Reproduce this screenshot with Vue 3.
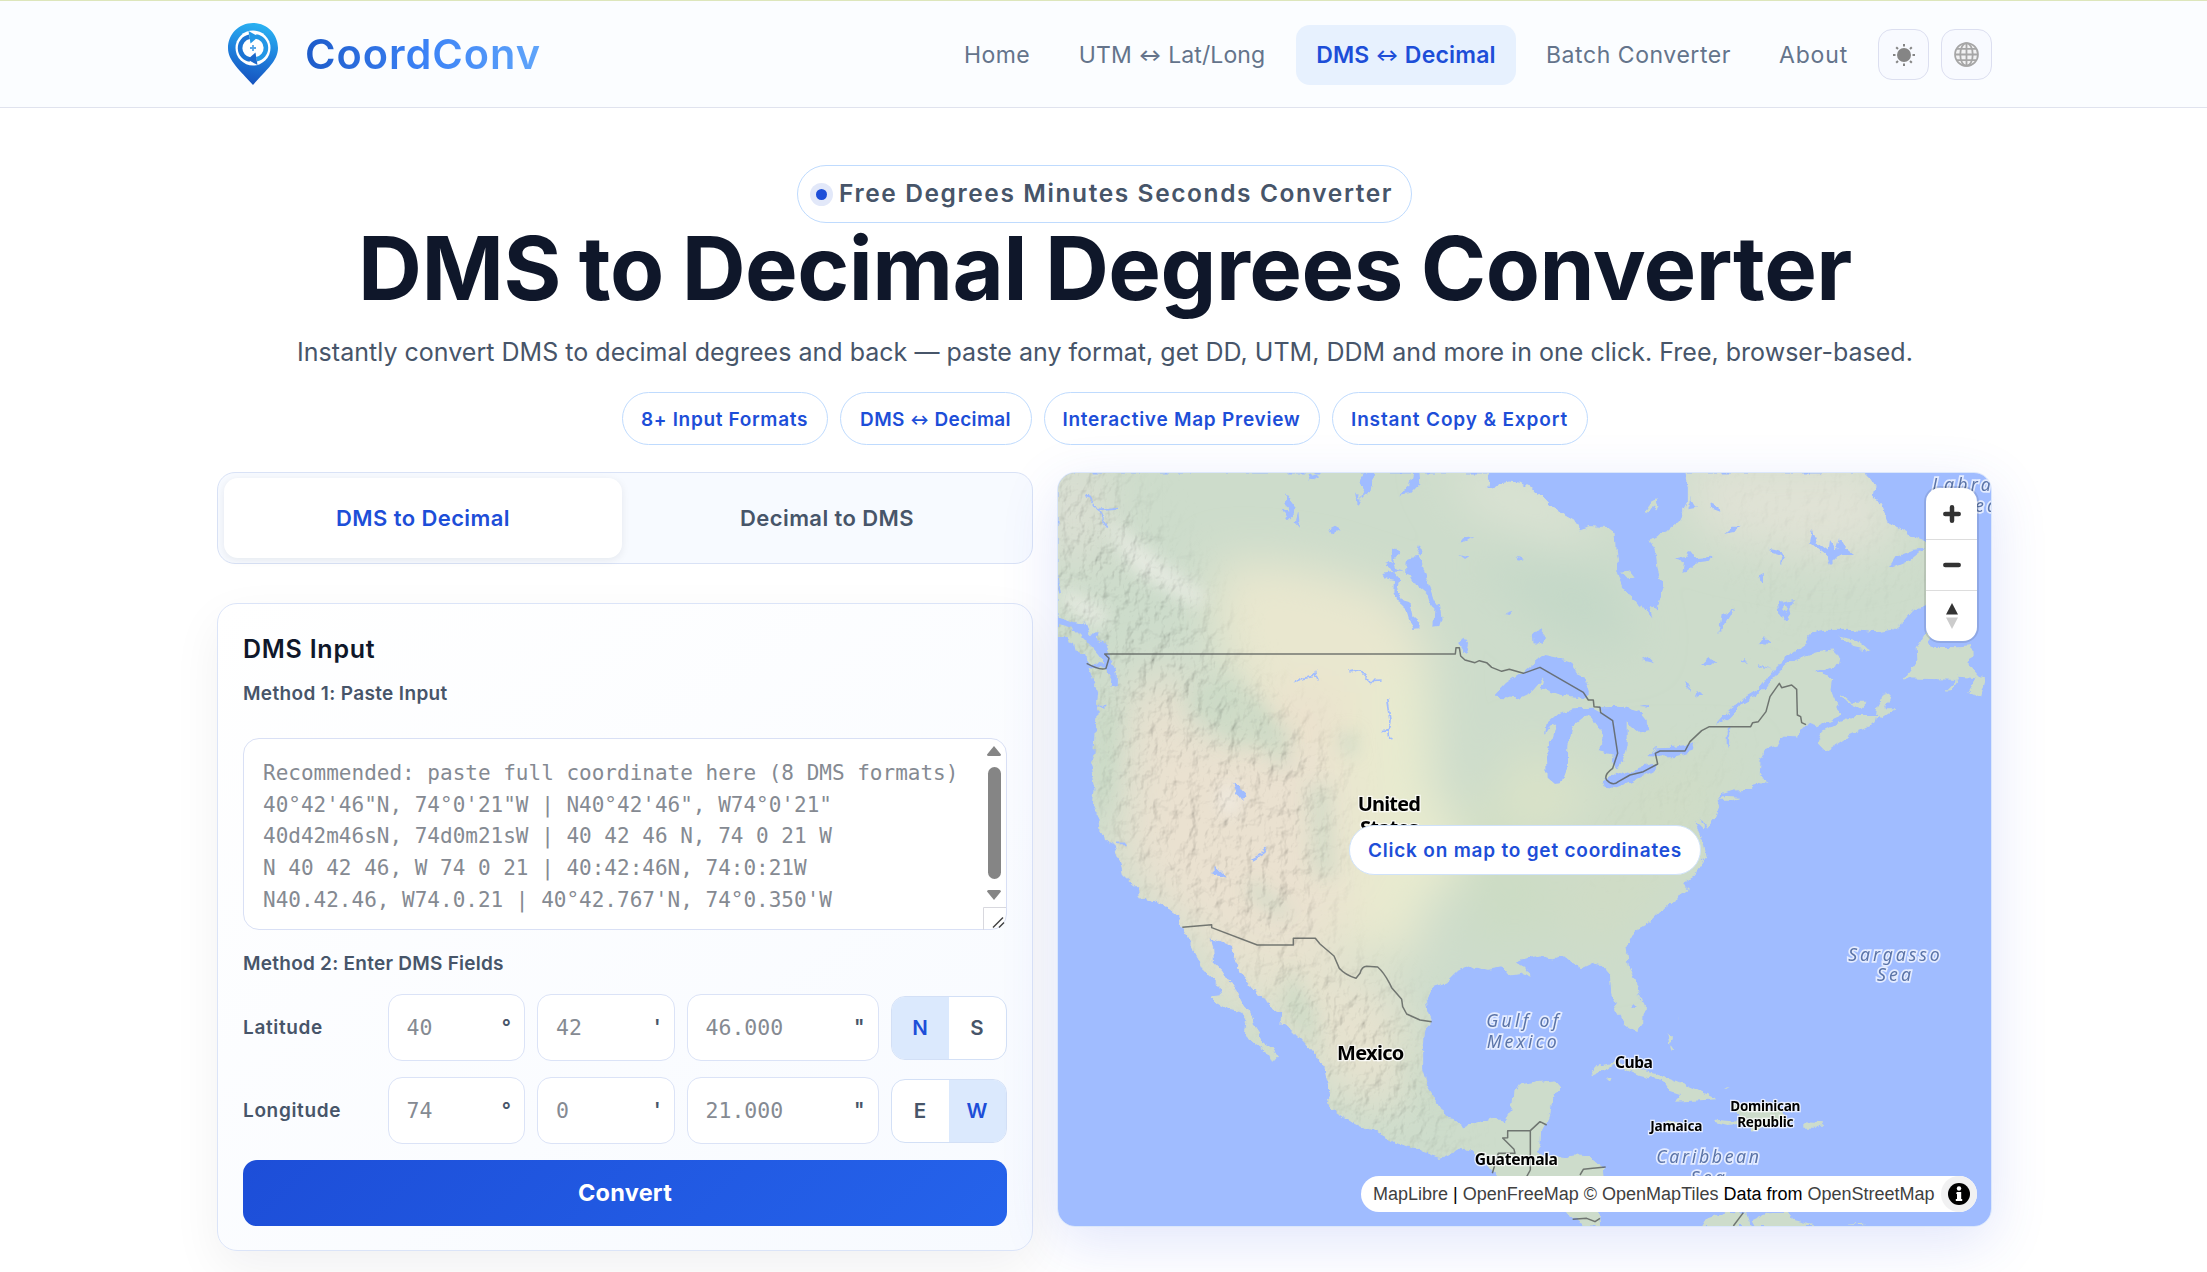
<script setup>
const nav = [
  { parts: ['Home'], width: 102, track: 0.39 },
  { parts: ['UTM', 'Lat/Long'], width: 224, track: 0.1 },
  { parts: ['DMS', 'Decimal'], width: 220, track: 0.2, active: true },
  { parts: ['Batch Converter'], width: 221, track: 0.56 },
  { parts: ['About'], width: 105, track: 0.82 },
]
const chips = [
  { parts: ['8+ Input Formats'], width: 206, track: 0.66 },
  { parts: ['DMS', 'Decimal'], width: 192, track: 0.35 },
  { parts: ['Interactive Map Preview'], width: 276, track: 0.75 },
  { parts: ['Instant Copy & Export'], width: 256, track: 0.86 },
]
const rows = [
  { label: 'Latitude', d: '40', m: '42', s: '46.000', dirs: ['N', 'S'], on: 'N' },
  { label: 'Longitude', d: '74', m: '0', s: '21.000', dirs: ['E', 'W'], on: 'W' },
]
const sample = `Recommended: paste full coordinate here (8 DMS formats)
40°42'46"N, 74°0'21"W | N40°42'46", W74°0'21"
40d42m46sN, 74d0m21sW | 40 42 46 N, 74 0 21 W
N 40 42 46, W 74 0 21 | 40:42:46N, 74:0:21W
N40.42.46, W74.0.21 | 40°42.767'N, 74°0.350'W`

const mainland = 'M54 39 L1345 39 L1340 85 L1370 76 L1410 69 L1440 73 L1470 85 L1500 102 L1530 133 L1570 165 L1610 188 L1618 210 L1650 200 L1705 203 L1725 218 L1728 260 L1732 300 L1730 340 L1745 380 L1770 410 L1795 450 L1810 440 L1840 478 L1830 440 L1855 450 L1860 420 L1870 385 L1855 330 L1850 285 L1830 240 L1880 215 L1920 180 L1945 130 L1945 80 L1935 39 L2470 39 L2485 50 L2505 80 L2500 105 L2525 140 L2540 185 L2575 205 L2590 215 L2620 232 L2655 245 L2665 275 L2668 430 L2620 450 L2590 485 L2560 507 L2510 515 L2430 508 L2350 508 L2315 515 L2290 558 L2240 590 L2200 630 L2160 685 L2110 715 L2070 745 L2020 800 L2070 772 L2110 730 L2160 702 L2200 655 L2235 620 L2280 592 L2330 575 L2380 570 L2400 590 L2395 615 L2360 627 L2310 633 L2340 643 L2375 655 L2370 690 L2390 745 L2405 762 L2330 797 L2300 790 L2270 828 L2230 825 L2215 853 L2180 865 L2160 900 L2158 940 L2170 960 L2180 970 L2150 962 L2130 988 L2080 990 L2050 1000 L2032 1025 L2036 1040 L2025 1070 L2000 1100 L1985 1070 L1987 1105 L1960 1082 L1975 1120 L1990 1150 L1998 1190 L1970 1230 L1965 1245 L1925 1270 L1945 1290 L1900 1320 L1870 1345 L1830 1385 L1785 1410 L1758 1460 L1765 1520 L1790 1580 L1810 1640 L1808 1690 L1790 1714 L1760 1695 L1730 1645 L1715 1600 L1712 1550 L1680 1513 L1655 1507 L1622 1523 L1580 1490 L1550 1495 L1500 1488 L1440 1500 L1425 1508 L1455 1525 L1470 1548 L1445 1540 L1410 1545 L1390 1520 L1340 1528 L1300 1517 L1250 1535 L1220 1565 L1178 1580 L1157 1625 L1160 1650 L1175 1688 L1155 1710 L1148 1770 L1148 1830 L1165 1885 L1190 1925 L1218 1972 L1240 1975 L1270 2000 L1320 1990 L1365 1978 L1392 1985 L1412 1955 L1422 1930 L1425 1890 L1440 1878 L1500 1867 L1545 1863 L1560 1880 L1532 1920 L1525 1970 L1505 2010 L1503 2050 L1490 2080 L1520 2090 L1570 2095 L1600 2088 L1655 2090 L1665 2105 L1690 2122 L1692 2150 L1680 2200 L1672 2250 L1680 2298 L1640 2298 L1600 2275 L1580 2250 L1500 2190 L1400 2170 L1365 2140 L1340 2110 L1300 2075 L1260 2065 L1230 2083 L1200 2092 L1120 2065 L1060 2042 L1000 2010 L950 1995 L905 1965 L875 1940 L862 1915 L872 1890 L862 1860 L855 1825 L830 1790 L790 1745 L755 1710 L720 1692 L722 1660 L690 1635 L680 1610 L650 1600 L625 1570 L600 1530 L585 1490 L577 1457 L545 1442 L510 1430 L518 1460 L520 1505 L545 1530 L565 1560 L590 1595 L605 1625 L630 1655 L640 1690 L660 1720 L665 1750 L697 1765 L712 1790 L697 1807 L685 1780 L650 1755 L616 1725 L620 1690 L600 1650 L560 1645 L530 1628 L512 1610 L545 1607 L540 1580 L520 1558 L485 1525 L475 1495 L455 1460 L440 1430 L425 1400 L418 1370 L380 1340 L350 1325 L298 1312 L295 1285 L250 1245 L240 1200 L225 1165 L200 1140 L182 1110 L180 1075 L160 1035 L165 990 L152 915 L165 880 L170 780 L175 700 L160 660 L147 620 L195 628 L210 650 L207 685 L232 680 L232 640 L215 600 L208 580 L200 550 L172 540 L178 518 L150 520 L135 480 L135 492 L100 488 L54 470 Z'

const islands = [
  'M54 528 L80 528 L85 545 L105 555 L110 575 L135 585 L145 605 L190 615 L185 595 L160 565 L135 540 L100 505 L54 492 Z',
  'M2655 515 L2672 560 L2760 562 L2797 558 L2798 590 L2775 603 L2800 625 L2822 650 L2835 655 L2820 712 L2785 695 L2810 655 L2760 650 L2730 693 L2715 695 L2750 660 L2700 658 L2590 655 L2632 600 L2630 560 Z',
  'M2400 530 L2450 540 L2495 575 L2440 563 Z',
  'M2400 700 L2430 725 L2480 725 L2460 745 L2410 720 Z',
  'M2395 790 L2450 768 L2515 768 L2510 790 L2430 825 L2400 845 L2355 875 L2330 850 L2345 815 Z',
  'M2535 700 L2550 710 L2535 745 L2565 745 L2530 768 L2508 765 L2512 740 Z',
  'M2035 1022 L2060 1008 L2100 1010 L2070 1022 Z',
  'M1647 1850 L1665 1820 L1730 1805 L1790 1825 L1850 1840 L1915 1865 L1960 1885 L2030 1918 L1905 1925 L1920 1905 L1890 1895 L1865 1860 L1800 1845 L1730 1815 L1680 1835 Z',
  'M1698 1855 L1715 1853 L1710 1865 Z',
  'M1875 1985 L1920 1990 L1900 2010 Z',
  'M2070 1935 L2150 1937 L2220 1955 L2255 1980 L2200 1990 L2135 2012 L2120 1990 L2060 1995 L2022 1985 L2030 1980 L2095 1985 L2090 1955 Z',
  'M2293 1987 L2350 1990 L2335 2003 L2293 2003 Z',
  'M1882 1720 L1898 1735 L1888 1752 Z',
  'M1893 1752 L1903 1768 L1897 1772 Z',
  'M1915 1685 L1922 1662 L1917 1680 Z',
  'M2052 1884 L2072 1880 L2060 1888 Z',
  'M1985 2298 L2000 2275 L2060 2255 L2115 2258 L2125 2285 L2140 2298 Z',
  'M2135 2280 L2180 2260 L2250 2258 L2260 2280 L2330 2298 L2145 2298 Z',
  'M2405 2291 L2475 2288 L2470 2293 Z',
  'M1815 156 L1838 122 L1850 118 L1855 140 L1848 158 L1842 136 L1826 160 Z',
  'M1742 335 L1770 332 L1787 353 L1760 355 Z',
]

const lakes = [
  'M945 100 L960 120 L972 78 L960 65 L968 39 L1000 39 L992 95 L970 110 L950 130 Z',
  'M1120 39 L1135 39 L1138 70 L1110 100 L1078 104 L1110 78 Z',
  'M802 65 L810 45 L840 39 L835 52 Z',
  'M738 97 L762 130 L758 165 L742 180 L724 150 L745 155 Z',
  'M775 155 L780 200 L767 185 Z',
  'M870 205 L885 197 L902 206 L878 220 Z',
  'M1105 292 L1135 288 L1150 320 L1168 370 L1185 420 L1200 440 L1205 475 L1198 498 L1180 500 L1183 450 L1168 430 L1160 405 L1130 380 L1110 345 L1095 340 L1097 310 Z',
  'M1132 285 L1140 257 L1148 270 L1140 288 Z',
  'M1052 270 L1068 265 L1078 280 L1060 300 L1075 330 L1092 335 L1060 335 L1032 315 L1055 305 Z',
  'M1027 342 L1060 335 L1078 355 L1072 385 L1088 420 L1108 425 L1118 470 L1140 490 L1138 508 L1120 510 L1102 450 L1075 425 L1060 395 L1062 360 L1035 355 Z',
  'M1262 250 L1275 232 L1303 228 L1275 245 Z',
  'M1255 285 L1288 292 L1275 300 Z',
  'M1430 290 L1452 296 L1440 302 Z',
  'M1390 465 L1420 455 L1410 468 Z',
  'M1258 550 L1268 528 L1290 555 L1278 580 Z',
  'M1478 520 L1500 508 L1515 525 L1510 555 L1480 545 Z',
  'M1362 710 L1400 670 L1450 635 L1490 600 L1510 585 L1560 595 L1590 605 L1610 640 L1635 650 L1650 700 L1630 718 L1560 705 L1505 685 L1510 655 L1480 690 L1430 715 L1400 712 Z',
  'M1515 825 L1520 790 L1560 755 L1600 745 L1660 743 L1690 760 L1720 790 L1735 830 L1745 860 L1735 925 L1715 910 L1718 880 L1668 870 L1690 850 L1690 820 L1660 780 L1640 765 L1620 780 L1595 800 L1582 860 L1580 930 L1565 970 L1545 972 L1520 950 L1518 890 L1540 830 L1550 790 L1530 800 Z',
  'M1680 742 L1750 740 L1800 755 L1820 780 L1825 812 L1795 820 L1760 790 L1760 850 L1750 900 L1732 925 L1738 870 L1720 790 L1690 765 Z',
  'M1690 965 L1730 935 L1760 945 L1800 920 L1850 910 L1845 930 L1800 955 L1755 975 L1730 985 L1695 980 Z',
  'M1822 888 L1850 862 L1900 860 L1940 855 L1960 850 L1955 875 L1910 888 L1850 890 Z',
  'M580 975 L595 975 L605 990 L615 1000 L620 1015 L605 1020 L590 1000 Z',
  'M2060 805 L2068 800 L2067 865 L2060 850 Z',
  'M1965 715 L1990 700 L1970 690 Z',
  'M1900 300 L1940 290 L1950 270 L1960 295 L2018 290 L2010 305 L1960 312 L1930 340 L1935 310 Z',
  'M2008 128 L2035 140 L2038 155 L2010 145 Z',
  'M1945 145 L1955 115 L1970 140 Z',
  'M2050 222 L2075 200 L2105 200 L2085 215 Z',
  'M2182 260 L2225 270 L2238 295 L2220 315 L2225 285 L2195 275 Z',
  'M2150 350 L2172 342 L2172 368 Z',
  'M2310 250 L2318 210 L2332 250 L2365 275 L2370 240 L2390 270 L2400 235 L2415 260 L2445 285 L2400 285 L2370 315 L2360 290 Z',
  'M2548 325 L2570 290 L2620 270 L2655 265 L2610 300 Z',
  'M2035 520 L2045 465 L2085 445 L2060 485 Z',
  'M2213 418 L2235 430 L2262 423 L2250 445 L2254 462 L2236 484 L2218 460 Z M2235 436 L2226 448 L2237 458 L2247 446 Z',
  'M1805 600 L1825 590 L1845 610 Z',
  'M1985 610 L2010 590 L2032 615 Z',
  'M2100 600 L2115 598 L2120 610 Z',
  'M1932 660 L1950 670 L1945 690 Z',
  'M2150 552 L2175 535 L2195 555 Z',
  'M2150 615 L2200 632 L2155 622 Z',
  'M1800 738 L1830 732 L1830 740 Z',
  'M1775 1640 L1785 1632 L1790 1642 L1780 1650 Z',
  'M513 1240 L530 1222 L545 1235 L560 1250 Z',
]

const rivers = 'M140 102 L175 155 L203 203 M170 152 L237 146 M762 668 L790 655 L820 650 L828 637 L835 665 M925 636 L955 630 L985 662 L1025 660 M1040 712 L1050 780 L1045 812 L1025 815 M1045 812 L1050 832 M680 1158 L665 1185 L638 1200 M225 1150 L260 1150 M54 355 L60 400 M170 737 L200 737'

const borders = 'M140 610 Q180 632 198 625 L207 595 L194 582 L1246 582 L1248 563 L1258 563 L1262 588 L1275 600 L1305 608 L1318 602 L1340 608 L1355 622 L1385 634 L1408 628 L1450 640 L1500 622 L1630 697 L1645 720 L1660 720 L1662 740 L1680 742 L1682 758 L1718 782 L1733 880 L1718 925 Q1690 945 1700 960 Q1718 980 1735 965 L1770 945 L1810 935 L1853 912 L1846 880 L1860 873 L1935 873 L1950 845 L1985 812 L2008 800 L2132 800 L2138 788 L2155 785 L2178 755 L2190 710 L2218 670 L2225 683 L2255 675 L2270 688 L2272 765 L2282 770 L2285 788 L2298 794 M427 1402 L515 1394 L515 1403 L652 1455 L760 1455 L760 1435 L826 1435 L840 1452 L882 1488 L898 1525 Q915 1545 948 1555 L960 1540 Q965 1520 980 1519 L1013 1521 Q1035 1540 1055 1583 L1085 1618 L1088 1640 L1100 1662 L1140 1680 L1175 1685 M1357 2140 L1375 2080 L1425 2080 L1422 2068 L1388 2034 L1403 2033 L1403 2012 L1471 2012 L1471 2130 M1471 2012 L1500 1985 L1520 1995 M1471 2130 L1460 2150 M1620 2145 L1630 2128 L1697 2121 M1598 2278 L1640 2275 L1665 2285 L1680 2275 M2080 2298 L2110 2258'

const labels = [
  { text: 'United', x: 1048, y: 1052, w: 190, size: 60, kind: 'country' },
  { text: 'States', x: 1048, y: 1124, w: 176, size: 60, kind: 'country' },
  { text: 'Mexico', x: 992, y: 1800, w: 202, size: 60, kind: 'country' },
  { text: 'Cuba', x: 1782, y: 1823, w: 114, size: 47, kind: 'country' },
  { text: 'Jamaica', x: 1909, y: 2013, w: 157, size: 41, kind: 'country' },
  { text: 'Dominican', x: 2176, y: 1953, w: 210, size: 41, kind: 'country' },
  { text: 'Republic', x: 2176, y: 2002, w: 169, size: 41, kind: 'country' },
  { text: 'Guatemala', x: 1429, y: 2115, w: 250, size: 47, kind: 'country' },
  { text: 'Gulf of', x: 1447, y: 1702, w: 216, size: 53, kind: 'sea' },
  { text: 'Mexico', x: 1445, y: 1763, w: 210, size: 53, kind: 'sea' },
  { text: 'Sargasso', x: 2562, y: 1502, w: 274, size: 53, kind: 'sea' },
  { text: 'Sea', x: 2562, y: 1563, w: 102, size: 53, kind: 'sea' },
  { text: 'Caribbean', x: 2003, y: 2110, w: 308, size: 53, kind: 'sea' },
  { text: 'Sea', x: 2003, y: 2171, w: 102, size: 53, kind: 'sea' },
  { text: 'Labrador', x: 2820, y: 94, w: 286, size: 53, kind: 'sea' },
  { text: 'Sea', x: 2820, y: 156, w: 102, size: 53, kind: 'sea' },
]
</script>

<template>
  <div class="page">
    <header class="top">
      <div class="wrap bar">
        <div class="brand">
          <svg class="pin" viewBox="0 0 50 62">
            <defs>
              <linearGradient id="pinFill" x1="0.6" y1="0" x2="0.4" y2="1">
                <stop offset="0" stop-color="#29b2f2" />
                <stop offset="0.5" stop-color="#1f7fdc" />
                <stop offset="1" stop-color="#1551bd" />
              </linearGradient>
            </defs>
            <path d="M25 0C11 0 0 11 0 25c0 13 12 22 25 37 13-15 25-24 25-37C50 11 39 0 25 0z" fill="url(#pinFill)" />
            <circle cx="25" cy="25" r="17.500" fill="#fff" />
            <path d="M22 36.500A11.500 11.500 0 0 1 21.500 13.800" fill="none" stroke="#1c74d3" stroke-width="4.600" />
            <path d="M28 13.500A11.500 11.500 0 0 1 28.500 36.200" fill="none" stroke="#2397e6" stroke-width="4.600" />
            <path d="M20.500 8l10 5.500-8 7z" fill="#2397e6" />
            <path d="M29.500 42l-10-5.500 8-7z" fill="#1c68cb" />
            <path d="M25 22v6M22 25h6" stroke="#58a7e8" stroke-width="1.800" />
          </svg>
          <span class="name">CoordConv</span>
        </div>
        <nav class="nav">
          <a v-for="n in nav" :key="n.parts.join()" :class="{ on: n.active }" :style="{ width: n.width + 'px', letterSpacing: n.track + 'px' }"><span>{{ n.parts[0] }}<template v-if="n.parts[1]">{{ ' ' }}<em>↔</em> {{ n.parts[1] }}</template></span></a>
          <button class="sq">
            <svg viewBox="0 0 24 24" width="24" height="24"><circle cx="12" cy="12" r="7" fill="#858585" /><g stroke="#858585" stroke-width="2"><path d="M12 1v2.500M12 20.500V23M1 12h2.500M20.500 12H23M4.200 4.200L6 6M18 18l1.800 1.800M4.200 19.800L6 18M18 6l1.800-1.800" /></g></svg>
          </button>
          <button class="sq">
            <svg viewBox="0 0 24 24" width="25" height="25"><circle cx="12" cy="12" r="11" fill="#f1f1f2" /><g fill="none" stroke="#a6a6a6" stroke-width="1.700"><circle cx="12" cy="12" r="11" /><ellipse cx="12" cy="12" rx="6" ry="11" /><path d="M12 1v22M1 12h22M2.500 6.500h19M2.500 17.500h19" /></g></svg>
          </button>
        </nav>
      </div>
    </header>

    <main class="wrap">
      <section class="hero">
        <div class="badge"><i class="dot"></i><span>Free Degrees Minutes Seconds Converter</span></div>
        <h1>DMS to Decimal Degrees Converter</h1>
        <p>Instantly convert DMS to decimal degrees and back — paste any format, get DD, UTM, DDM and more in one click. Free, browser-based.</p>
        <ul class="chips">
          <li v-for="c in chips" :key="c.parts.join()" :style="{ width: c.width + 'px', letterSpacing: c.track + 'px' }"><span>{{ c.parts[0] }}<template v-if="c.parts[1]">{{ ' ' }}<em>↔</em> {{ c.parts[1] }}</template></span></li>
        </ul>
      </section>

      <div class="cols">
        <div class="left">
          <div class="tabs">
            <button class="on">DMS to Decimal</button>
            <button>Decimal to DMS</button>
          </div>
          <section class="card">
            <h2>DMS Input</h2>
            <h3>Method 1: Paste Input</h3>
            <div class="area">
              <pre>{{ sample }}</pre>
              <div class="scroll">
                <svg width="14" height="10" viewBox="0 0 14 10"><path d="M7 0L14 8.500Q14 10 12.500 10H1.500Q0 10 0 8.500Z" fill="#858585" /></svg>
                <i></i>
                <svg width="14" height="10" viewBox="0 0 14 10"><path d="M7 10L14 1.500Q14 0 12.500 0H1.500Q0 0 0 1.500Z" fill="#858585" /></svg>
              </div>
              <svg class="grip" width="23" height="23" viewBox="0 0 23 23"><path d="M.5 23V.5H23" fill="none" stroke="#d8d8de" /><path d="M10 20.500L20 10.500M16 20.500l5-5" stroke="#444" stroke-width="1.500" /></svg>
            </div>
            <h3 class="second">Method 2: Enter DMS Fields</h3>
            <div v-for="r in rows" :key="r.label" class="row">
              <label>{{ r.label }}</label>
              <div class="field">{{ r.d }}<sup>°</sup></div>
              <div class="field">{{ r.m }}<sup>'</sup></div>
              <div class="field wide">{{ r.s }}<sup>"</sup></div>
              <div class="toggle"><b v-for="k in r.dirs" :key="k" :class="{ on: k === r.on }">{{ k }}</b></div>
            </div>
            <button class="convert">Convert</button>
          </section>
        </div>

        <section class="map">
          <svg class="canvas" viewBox="54 39 2799 2259" preserveAspectRatio="none">
            <defs>
              <filter id="rough" x="0" y="0" width="1" height="1">
                <feTurbulence type="fractalNoise" baseFrequency="0.035" numOctaves="3" seed="4" result="n" />
                <feDisplacementMap in="SourceGraphic" in2="n" scale="22" xChannelSelector="R" yChannelSelector="G" />
              </filter>
              <filter id="soft" filterUnits="userSpaceOnUse" x="-200" y="-200" width="3300" height="2740"><feGaussianBlur stdDeviation="70" /></filter>
              <filter id="soft2" filterUnits="userSpaceOnUse" x="-200" y="-200" width="3300" height="2740"><feGaussianBlur stdDeviation="25" /></filter>
              <filter id="relief" x="0" y="0" width="1" height="1">
                <feTurbulence type="fractalNoise" baseFrequency="0.026 0.017" numOctaves="4" seed="11" />
                <feColorMatrix values="0 0 0 0 0  0 0 0 0 0  0 0 0 0 0  1 0 0 0 0" />
                <feDiffuseLighting surfaceScale="17" lighting-color="#fff" diffuseConstant="1.250"><feDistantLight azimuth="225" elevation="54" /></feDiffuseLighting>
              </filter>
              <mask id="land" maskUnits="userSpaceOnUse" x="0" y="0" width="2900" height="2340">
                <g filter="url(#rough)">
                  <rect x="0" y="0" width="2900" height="2340" fill="#000" />
                  <path :d="mainland" fill="#fff" stroke="#fff" stroke-width="3" />
                  <path v-for="(d, i) in lakes" :key="'l' + i" :d="d" fill="#000" fill-rule="evenodd" />
                  <path v-for="(d, i) in islands" :key="'i' + i" :d="d" fill="#fff" />
                  <path :d="rivers" fill="none" stroke="#000" stroke-width="5" />
                </g>
              </mask>
              <mask id="hills" maskUnits="userSpaceOnUse" x="0" y="0" width="2900" height="2340">
                <g filter="url(#soft)" fill="#fff">
                  <path d="M0 0H200L480 400L620 680L880 850L900 1100L860 1350L700 1450L420 1400L200 1150L160 700L0 500Z" />
                  <path d="M560 1440L800 1450L1100 1600L1130 1800L1250 2050L1200 2120L900 2000L760 1700Z" />
                  <path d="M2000 850L2100 780L1960 1050L1700 1230L1680 1180Z" opacity=".3" />
                  <path d="M2000 0L2660 0L2660 450L2200 500Z" opacity=".18" />
                </g>
              </mask>
            </defs>
            <rect x="0" y="0" width="2900" height="2340" fill="#a0bcff" />
            <g mask="url(#land)">
              <rect x="0" y="0" width="2900" height="2340" fill="#cddccb" />
              <g filter="url(#soft)">
                <path d="M540 300L800 320L1050 400L1160 560L1180 900L1150 1200L1130 1500L1000 1480L700 1450L600 700L520 500Z" fill="#e9e7cf" />
                <path d="M1000 600L1160 640L1180 1000L1310 1160L1200 1300L1000 1480Z" fill="#e8ebcf" />
                <path d="M300 640L440 640L450 800L880 880L900 1300L850 1460L700 1500L380 1380L240 1200L260 800Z" fill="#eae1d0" />
                <path d="M640 680L900 700L900 860L740 850Z" fill="#ebe0cd" />
                <path d="M430 1400L800 1450L1080 1600L1120 1850L1050 1950L880 1900L750 1700L600 1550L640 1780Z" fill="#e6e2cf" />
                <path d="M1900 0L2500 0L2600 250L2350 300L2000 230Z" fill="#e0e2d5" />
                <path d="M1200 0L1500 60L1700 220L1600 260L1300 150Z" fill="#dce3d4" />
                <path d="M1450 850L1700 1000L1500 1150L1300 1100Z" fill="#d9e2c8" />
                <path d="M0 0H200V300H0Z" fill="#dbdfd3" />
                <path d="M1280 300L1700 300L1800 560L1600 560Z" fill="#c4d8c8" />
                <path d="M1250 1000L1500 1200L1600 1400L1300 1450Z" fill="#ccdcc4" />
                <path d="M1800 900L2100 900L1900 1300L1700 1500L1500 1350Z" fill="#cfdcc6" />
              </g>
              <g filter="url(#soft2)" fill="#c9d9c5">
                <path d="M440 700L560 640L680 740L720 860L580 860L460 760Z" opacity=".7" />
                <path d="M180 740L230 740L210 1080L170 1000Z" />
                <path d="M800 980L870 970L890 1250L820 1250Z" opacity=".6" />
                <path d="M640 1260L760 1360L720 1370L620 1300Z" opacity=".7" />
                <path d="M620 700L760 820L740 930L680 900Z" opacity=".6" />
                <path d="M750 1520L830 1650L830 1780L720 1640Z" opacity=".7" />
                <path d="M1060 1700L1150 1850L1220 1970L1130 1900Z" opacity=".6" />
                <path d="M905 820h40v60h-30z" />
              </g>
              <g fill="#f3f1ec" filter="url(#soft2)" opacity=".7">
                <path d="M180 160L500 410L470 440L280 330Z" />
                <path d="M60 380L200 450L190 510L70 440Z" />
                <path d="M540 980L590 980L590 1060L545 1060Z" />
              </g>
              <g class="shade" mask="url(#hills)"><rect x="0" y="0" width="2900" height="2340" filter="url(#relief)" /></g>
            </g>
            <path :d="borders" fill="none" stroke="#5e6360" stroke-width="4.500" stroke-linejoin="round" opacity=".85" />
            <text v-for="(t, i) in labels" :key="'t' + i" :x="t.x" :y="t.y" :textLength="t.w" :font-size="t.size" :class="t.kind">{{ t.text }}</text>
          </svg>
          <div class="hint">Click on map to get coordinates</div>
          <div class="ctrl">
            <i><svg width="18" height="18" viewBox="0 0 18 18"><path d="M9 2.300v13.400M2.300 9h13.400" stroke="#333" stroke-width="4.500" stroke-linecap="round" /></svg></i>
            <i><svg width="18" height="18" viewBox="0 0 18 18"><path d="M2.300 9h13.400" stroke="#333" stroke-width="4.500" stroke-linecap="round" /></svg></i>
            <i><svg width="12" height="26" viewBox="0 0 12 26"><path d="M6 0l6 11.500H0z" fill="#333" /><path d="M6 26l6-11.500H0z" fill="#ccc" /></svg></i>
          </div>
          <div class="attr">
            <span><a>MapLibre</a> | <a>OpenFreeMap</a> <a>© OpenMapTiles</a> Data from <a>OpenStreetMap</a></span>
            <i><svg width="36" height="36" viewBox="0 0 36 36"><circle cx="18" cy="18" r="18" fill="#f1f1f2" /><circle cx="18" cy="18" r="11" fill="#000" /><circle cx="18" cy="12.500" r="2.200" fill="#fff" /><path d="M15.700 16h4.500v7h1v2h-6.400v-2h1.200v-5h-.8z" fill="#fff" /></svg></i>
          </div>
        </section>
      </div>
    </main>
  </div>
</template>

<style>
html, body { margin: 0; overflow: hidden; background: #fff; }
</style>

<style scoped>
* { box-sizing: border-box; }
.page { height: 1272px; overflow: hidden; font-family: Inter, "Liberation Sans", sans-serif; color: #475569; white-space: nowrap; background: #fff; }
button { font: inherit; border: 0; margin: 0; padding: 0; background: none; color: inherit; }
em { font-style: normal; font-size: .75em; font-weight: 700; position: relative; top: -.06em; }
.wrap { width: 1776px; margin-left: 217px; }
.top { height: 108px; border-top: 1px solid #dde6bb; border-bottom: 1px solid #e0e3ee; background: #fbfdff; }
.bar { height: 106px; display: flex; justify-content: space-between; align-items: center; padding-top: 1px; }
.brand { display: flex; align-items: center; gap: 27px; padding-left: 11px; }
.pin { width: 50px; height: 62px; margin-top: -2px; }
.name { margin-top: -2px; font-size: 41.500px; font-weight: 600; line-height: 50px; letter-spacing: .95px; background: linear-gradient(90deg, #1d5bc9, #3b82f6 50%, #60a5fa); background-clip: text; -webkit-background-clip: text; color: transparent; }
.nav { display: flex; align-items: center; gap: 12px; margin-right: 1px; color: #64748b; font-size: 23px; }
.nav a { height: 60px; display: flex; align-items: center; justify-content: center; border-radius: 14px; }
.nav a.on { background: #e7f1fe; color: #1d4ed8; font-weight: 600; }
.sq { width: 51px; height: 51px; border: 1px solid #dcdff0; border-radius: 14px; background: #f8faff; display: flex; align-items: center; justify-content: center; }
.hero { padding-top: 57px; display: flex; flex-direction: column; align-items: center; }
.badge { width: 615px; height: 58px; margin-right: 1px; border: 1px solid #bfdbfe; border-radius: 29px; display: flex; align-items: center; padding-left: 18px; gap: 12px; font-size: 24.500px; font-weight: 600; letter-spacing: 1.600px; }
.badge span { position: relative; top: -1px; }
.dot { width: 11px; height: 11px; border-radius: 50%; background: #1d4ed8; box-shadow: 0 0 0 6px #e2e8f9; }
h1 { margin: 0; font-size: 88.500px; line-height: 90px; font-weight: 700; letter-spacing: -.5px; word-spacing: -2.500px; color: #0f172a; }
.hero p { margin: 19px 0 0; font-size: 25px; line-height: 40px; letter-spacing: .02px; }
.chips { list-style: none; margin: 20px 1px 0 0; padding: 0; display: flex; gap: 12px; }
.chips li { height: 53px; border: 1px solid #bfdbfe; border-radius: 27px; display: flex; align-items: center; justify-content: center; padding-top: 2px; font-size: 19px; font-weight: 600; color: #1d4ed8; }
.cols { display: flex; gap: 24px; margin-top: 27px; }
.left { width: 816px; }
.tabs { height: 92px; padding: 5px 6px; border: 1px solid #d9e2f6; border-radius: 18px; background: #f7faff; display: flex; gap: 6px; }
.tabs button { flex: 1; border-radius: 14px; font-size: 22px; font-weight: 600; letter-spacing: .41px; }
.tabs .on { background: #fff; color: #1d4ed8; box-shadow: 0 2px 8px rgba(15, 23, 42, .08); }
.card { margin-top: 39px; height: 648px; padding: 28px 25px 0; border: 1px solid #dbe4f8; border-radius: 20px; background: linear-gradient(145deg, #fff, #f7faff); box-shadow: 0 18px 50px rgba(15, 23, 42, .06); }
h2 { margin: 0; font-size: 25px; line-height: 34px; font-weight: 600; letter-spacing: .75px; color: #0f172a; }
h3 { margin: 13px 0 0; font-size: 19px; line-height: 30px; font-weight: 600; letter-spacing: .35px; }
.area { position: relative; margin-top: 29px; height: 192px; border: 1px solid #d9e0f5; border-radius: 16px; background: #fff; padding: 19px 0 0 19px; }
pre { margin: 0; font: 21px/31.700px "DejaVu Sans Mono", monospace; color: #858a92; }
.scroll { position: absolute; right: 5px; top: 7px; height: 154px; width: 14px; display: flex; flex-direction: column; align-items: center; justify-content: space-between; }
.scroll i { width: 13px; height: 112px; border-radius: 7px; background: #858585; }
.grip { position: absolute; right: 0; bottom: -1px; }
h3.second { margin: 19px 0 15px; letter-spacing: .25px; }
.row { height: 67px; margin-bottom: 16px; display: flex; align-items: center; }
.row label { width: 144.500px; font-size: 19px; font-weight: 600; letter-spacing: .65px; }
.field { position: relative; width: 137.500px; height: 67px; margin-right: 12px; border: 1px solid #dbe3f7; border-radius: 14px; background: #fff; padding-left: 18px; line-height: 66px; font-family: "DejaVu Sans Mono", monospace; font-size: 21.500px; color: #858a92; }
.field.wide { width: 192px; }
.field sup { position: absolute; right: 13px; top: 0; font: 600 20px/64px Inter, sans-serif; color: #475569; }
.toggle { width: 116px; height: 64px; border: 1px solid #d3e0f6; border-radius: 14px; overflow: hidden; display: flex; background: #fff; }
.toggle b { flex: 1; display: flex; align-items: center; justify-content: center; font-size: 20.500px; font-weight: 600; }
.toggle b.on { background: #dbe9fd; color: #1d4ed8; }
.convert { width: 764px; height: 66px; padding-bottom: 1px; border-radius: 14px; color: #fff; font-size: 23.500px; font-weight: 700; letter-spacing: .24px; background: linear-gradient(135deg, #1d4ed8, #2563eb); }
.map { position: relative; width: 935px; height: 755px; border: 1px solid #dbe7fb; border-radius: 18px; overflow: hidden; box-shadow: 0 16px 56px rgba(60, 90, 225, .15); }
.canvas { display: block; width: 933px; height: 753px; }
.shade { mix-blend-mode: multiply; opacity: .27; }
.country { font-family: "Noto Sans", sans-serif; font-weight: 700; text-anchor: middle; fill: #000; stroke: rgba(255, 255, 255, .75); stroke-width: 8; paint-order: stroke; }
.sea { font-family: "Noto Sans", sans-serif; font-style: italic; text-anchor: middle; fill: #5b74a8; stroke: rgba(255, 255, 255, .72); stroke-width: 10; paint-order: stroke; }
.hint { position: absolute; left: 291px; top: 352px; width: 352px; height: 50px; border-radius: 25px; border: 1px solid #cfe2fb; background: #fff; color: #1d4ed8; font-size: 19px; font-weight: 600; letter-spacing: .79px; display: flex; align-items: center; justify-content: center; }
.ctrl { position: absolute; right: 14px; top: 15px; width: 51px; height: 153px; border-radius: 14px; background: #fff; box-shadow: 0 0 0 2px rgba(0, 0, 0, .1); }
.ctrl i { height: 51px; display: flex; align-items: center; justify-content: center; }
.ctrl i + i { border-top: 1px solid #ddd; }
.attr { position: absolute; right: 14px; bottom: 14px; width: 616px; height: 36px; border-radius: 18px; background: #fff; padding-left: 12px; display: flex; align-items: center; justify-content: space-between; font-family: "Liberation Sans", Arial, sans-serif; font-size: 18px; color: #000; }
.attr a { color: #404040; }
.attr i, .attr svg { display: block; }
</style>
